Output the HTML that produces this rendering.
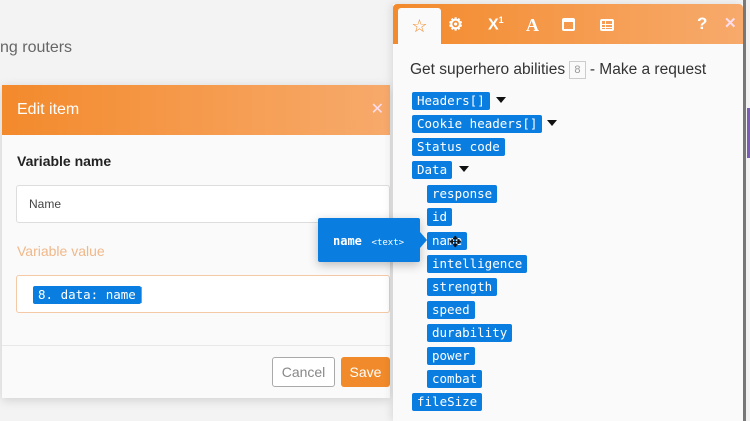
<!DOCTYPE html>
<html><head><style>
*{margin:0;padding:0;box-sizing:border-box}
body{width:750px;height:421px;overflow:hidden;background:#f3f3f3;font-family:"Liberation Sans",sans-serif;position:relative}
.abs{position:absolute}
.pill{position:absolute;height:18px;line-height:18px;background:#0a7de0;color:#fff;font-family:"DejaVu Sans Mono","Liberation Mono",monospace;font-size:12.5px;padding:0 5px;border-radius:2px}
.tri{position:absolute;width:0;height:0;border-left:5px solid transparent;border-right:5px solid transparent;border-top:6px solid #111}
.ic{position:absolute;top:16px;color:#fff;font-size:16px;font-weight:bold}
</style></head><body>
<div class="abs" style="left:0;top:39px;font-size:16px;color:#666">ng routers</div>

<div class="abs" style="left:2px;top:85px;width:388px;height:313px;background:#fafafa;box-shadow:0 2px 10px rgba(0,0,0,.15)">
 <div style="height:50px;background:linear-gradient(90deg,#f38a2c,#f7aa6c);color:#fff;font-size:16px;line-height:50px;padding-left:15px">Edit item<span style="position:absolute;right:6px;top:0;font-size:16px;color:#fde">✕</span></div>
 <div class="abs" style="left:15px;top:68px;font-size:14px;font-weight:bold;color:#222">Variable name</div>
 <div class="abs" style="left:14px;top:100px;width:374px;height:38px;background:#fff;border:1px solid #ddd;border-radius:3px;font-size:12px;color:#444;line-height:36px;padding-left:12px">Name</div>
 <div class="abs" style="left:15px;top:158px;font-size:14px;color:#f0b88a">Variable value</div>
 <div class="abs" style="left:14px;top:190px;width:374px;height:38px;background:#fff;border:1px solid #f3c9a6;border-radius:3px">
  <span class="pill" style="left:16px;top:10px;height:18px">8. data: name</span>
  <span class="abs" style="left:124px;top:11px;width:1px;height:16px;background:#999"></span>
 </div>
 <div class="abs" style="left:0;top:260px;width:388px;height:1px;background:#e8e8e8"></div>
 <div class="abs" style="left:270px;top:272px;width:63px;height:30px;border:1px solid #aaa;border-radius:3px;background:#fff;color:#888;font-size:14px;text-align:center;line-height:28px">Cancel</div>
 <div class="abs" style="left:339px;top:272px;width:49px;height:30px;border-radius:3px;background:#f08a2a;color:#fff;font-size:14px;text-align:center;line-height:30px">Save</div>
</div>

<div class="abs" style="left:743px;top:0;width:3px;height:421px;background:#7a7a7a"></div>
<div class="abs" style="left:747px;top:108px;width:3px;height:50px;background:#7b5fb3"></div>
<div class="abs" style="left:393px;top:4px;width:350px;height:417px;background:#fafafa;box-shadow:-2px 0 8px rgba(0,0,0,.1)">
 <div style="height:40px;background:linear-gradient(90deg,#f38a2c,#f7aa6c);border-radius:4px 4px 0 0;position:relative">
  <div class="abs" style="left:5px;top:4px;width:43px;height:36px;background:#fafafa;border-radius:3px 3px 0 0;text-align:center;line-height:36px;color:#f08a2a;font-size:18px">☆</div>
  <span class="ic" style="left:55px;top:11px;font-size:17px">⚙</span>
  <span class="ic" style="left:95px;top:11px">X<sup style="font-size:9px">1</sup></span>
  <span class="ic" style="left:133px;top:11px;font-family:'Liberation Serif',serif;font-size:18px">A</span>
  <span class="abs" style="left:169px;top:14px;width:13px;height:13px;border:2px solid #fff;border-top-width:4px;border-radius:2px"></span>
  <span class="abs" style="left:207px;top:15px;width:14px;height:12px;border:2px solid #fff;border-radius:2px;background:linear-gradient(#fff,#fff) 0 3px/100% 1px no-repeat,linear-gradient(#fff,#fff) 0 6px/100% 1px no-repeat,linear-gradient(#fff,#fff) 3px 0/1px 100% no-repeat"></span>
  <span class="ic" style="left:304px;top:10px;font-size:17px">?</span>
  <span class="ic" style="left:331px;top:10px;font-size:15px;color:#fde">✕</span>
 </div>
 <div class="abs" style="left:17px;top:57px;font-size:15.5px;color:#333">Get superhero abilities <span style="display:inline-block;border:1px solid #ccc;color:#999;font-size:11px;padding:0 4px;line-height:16px;vertical-align:1px">8</span> - Make a request</div>
</div>
<span class="pill" style="left:412px;top:92px">Headers[]</span><span class="tri" style="left:496px;top:97px"></span>
<span class="pill" style="left:412px;top:115px">Cookie headers[]</span><span class="tri" style="left:547px;top:120px"></span>
<span class="pill" style="left:412px;top:138px">Status code</span>
<span class="pill" style="left:412px;top:161px">Data</span><span class="tri" style="left:459px;top:166px"></span>
<span class="pill" style="left:427px;top:185px">response</span>
<span class="pill" style="left:427px;top:208px">id</span>
<span class="pill" style="left:427px;top:232px">name</span>
<span class="pill" style="left:427px;top:255px">intelligence</span>
<span class="pill" style="left:427px;top:278px">strength</span>
<span class="pill" style="left:427px;top:301px">speed</span>
<span class="pill" style="left:427px;top:324px">durability</span>
<span class="pill" style="left:427px;top:347px">power</span>
<span class="pill" style="left:427px;top:370px">combat</span>
<span class="pill" style="left:412px;top:393px">fileSize</span>
<span class="abs" style="left:449px;top:233px;font-size:15px;color:#111">✥</span>

<div class="abs" style="left:318px;top:218px;width:102px;height:44px;background:#0a7de0;border-radius:2px;box-shadow:0 3px 10px rgba(0,0,0,.25);color:#fff;font-family:'DejaVu Sans Mono',monospace;line-height:44px;padding-left:15px"><b style="font-size:12px">name</b> <span style="font-size:9px">&lt;text&gt;</span></div>
<div class="abs" style="left:420px;top:232px;width:0;height:0;border-top:8px solid transparent;border-bottom:8px solid transparent;border-left:7px solid #0a7de0"></div>
</body></html>
